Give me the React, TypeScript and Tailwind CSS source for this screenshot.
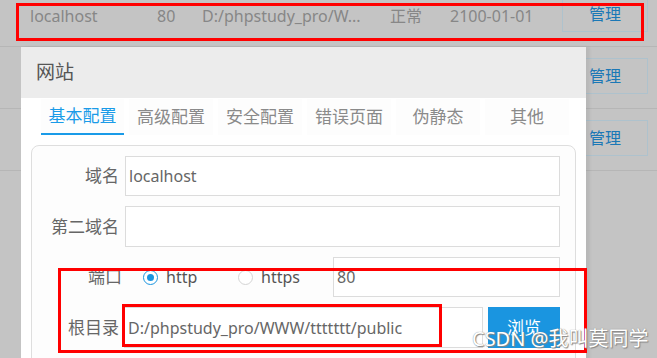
import React from 'react';

type Site = { domain: string; port: string; path: string; status: string; expire: string };

const sites: Site[] = [
    { domain: 'localhost', port: '80', path: 'D:/phpstudy_pro/W...', status: '正常', expire: '2100-01-01' },
    { domain: '', port: '', path: '', status: '', expire: '' },
    { domain: '', port: '', path: '', status: '', expire: '' },
];

const tabs = ['基本配置', '高级配置', '安全配置', '错误页面', '伪静态', '其他'];

function Radio({ checked, label }: { checked?: boolean; label: string }) {
    return (
        <label className="flex items-center gap-[8px] w-[95px]">
            <span
                className={
                    checked
                        ? 'w-[15px] h-[15px] rounded-full border border-[#1a95e0] bg-white flex items-center justify-center'
                        : 'w-[15px] h-[15px] rounded-full border border-[#d4d4d4] bg-white'
                }
            >
                {checked && <span className="w-[7px] h-[7px] rounded-full bg-[#1a95e0]" />}
            </span>
            <span className="text-[16px] text-[#555]">{label}</span>
        </label>
    );
}

export default function App() {
    return (
        <div
            className="relative w-[657px] h-[358px] overflow-hidden bg-[#c4c4c4]"
            style={{ fontFamily: '"Noto Sans", "Noto Sans CJK SC", sans-serif' }}
        >
            {/* site table underneath the dialog */}
            <div className="mt-[-15px] flex flex-col">
                {sites.map((s, i) => (
                    <div key={i} className="h-[62px] flex items-center border-b border-[#b6b6b6] text-[16px] text-[#878787]">
                        <span className="w-[157px] pl-[30px]">{s.domain}</span>
                        <span className="w-[45px]">{s.port}</span>
                        <span className="w-[188px]">{s.path}</span>
                        <span className="w-[60px]">{s.status}</span>
                        <span className="w-[112px]">{s.expire}</span>
                        <button className="w-[86px] h-[36px] mt-[-4px] border border-[#aec2cd] text-[16px] text-[#1b78b6]">
                            管理
                        </button>
                    </div>
                ))}
            </div>

            {/* dialog */}
            <div className="absolute left-[21px] top-[47px] w-[565px] h-[330px] bg-white rounded-t-[2px] shadow-[4px_0_3px_rgba(0,0,0,0.06)]">
                <div className="h-[51px] bg-[#ececec] flex items-center pl-[15px] text-[19px] text-[#555]">网站</div>
                <div className="flex gap-[5px] pl-[20px] pt-[1px]">
                    {tabs.map((t, i) => (
                        <div
                            key={t}
                            className={
                                i === 0
                                    ? 'w-[83px] h-[36px] flex items-center justify-center bg-[#fdfdfd] border-b-2 border-[#1a9be8] text-[17px] text-[#1a9be8]'
                                    : 'w-[84px] h-[36px] flex items-center justify-center bg-[#fdfdfd] text-[17px] text-[#8a8a8a]'
                            }
                        >
                            {t}
                        </div>
                    ))}
                </div>
                <div className="mt-[10px] ml-[10px] w-[545px] h-[240px] border border-[#dedede] rounded-[8px] bg-[#fdfdfd] pt-[10px] pr-[15px] flex flex-col gap-[10px]">
                    <div className="flex items-center gap-[6px] h-[40px]">
                        <span className="w-[87px] text-right text-[17px] text-[#666]">域名</span>
                        <div className="flex-1 h-[40px] border border-[#dcdcdc] bg-white flex items-center pl-[3px] text-[16px] text-[#666]">
                            localhost
                        </div>
                    </div>
                    <div className="flex items-center gap-[6px] h-[41px]">
                        <span className="w-[87px] text-right text-[17px] text-[#666]">第二域名</span>
                        <div className="flex-1 h-[41px] border border-[#dcdcdc] bg-white" />
                    </div>
                    <div className="flex items-center h-[40px]">
                        <span className="w-[90px] text-right text-[17px] text-[#666]">端口</span>
                        <div className="flex ml-[21px]">
                            <Radio checked label="http" />
                            <Radio label="https" />
                        </div>
                        <div className="flex-1 h-[40px] border border-[#dcdcdc] bg-white flex items-center pl-[3px] text-[16px] text-[#666]">
                            80
                        </div>
                    </div>
                    <div className="flex items-center gap-[5px] h-[41px]">
                        <span className="w-[87px] text-right text-[17px] text-[#666]">根目录</span>
                        <div className="flex-1 h-[41px] border border-[#dcdcdc] bg-white flex items-center pl-[3px] text-[16px] text-[#666] whitespace-nowrap">
                            D:/phpstudy_pro/WWW/ttttttt/public
                        </div>
                        <button className="w-[72px] h-[41px] bg-[#1a95e0] text-white text-[17px]">浏览</button>
                    </div>
                </div>
            </div>

            {/* annotation boxes */}
            <div className="absolute left-[16px] top-[3px] w-[628px] h-[38px] border-[3px] border-[#ff0000]" />
            <div className="absolute left-[58px] top-[268px] w-[529px] h-[85px] border-[3px] border-[#ff0000]" />
            <div className="absolute left-[122px] top-[304px] w-[320px] h-[43px] border-[3px] border-[#ff0000]" />

            {/* watermark */}
            <div
                className="absolute left-[472px] top-[324px] text-[20px] text-white whitespace-nowrap"
                style={{ textShadow: '0 0 1px #777, 1px 1px 1px #888' }}
            >
                CSDN @我叫莫同学
            </div>
        </div>
    );
}
